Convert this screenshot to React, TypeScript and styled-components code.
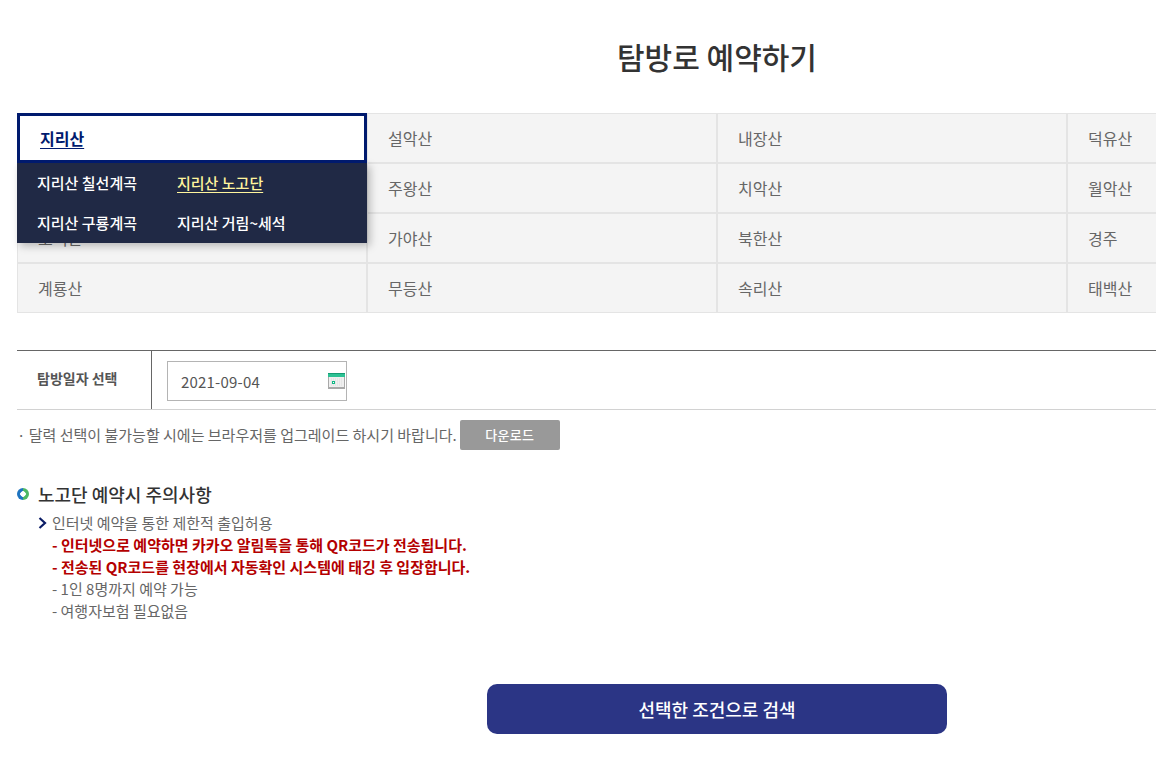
import * as React from 'react'
import styled, { createGlobalStyle } from 'styled-components'

const parks = [
  ['지리산', '설악산', '내장산', '덕유산'],
  ['오대산', '주왕산', '치악산', '월악산'],
  ['소백산', '가야산', '북한산', '경주'],
  ['계룡산', '무등산', '속리산', '태백산'],
]

const courses = [
  { name: '지리산 칠선계곡' },
  { name: '지리산 노고단', active: true },
  { name: '지리산 구룡계곡' },
  { name: '지리산 거림~세석' },
]

const notes = [
  { text: '- 인터넷으로 예약하면 카카오 알림톡을 통해 QR코드가 전송됩니다.', warn: true },
  { text: '- 전송된 QR코드를 현장에서 자동확인 시스템에 태깅 후 입장합니다.', warn: true },
  { text: '- 1인 8명까지 예약 가능' },
  { text: '- 여행자보험 필요없음' },
]

const CalendarIcon = () => (
  <svg width='17' height='16' viewBox='0 0 17 16'>
    <rect x='0' y='0' width='17' height='16' fill='#a9a9a9' />
    <rect x='1' y='4' width='15' height='10' fill='#efefef' />
    <rect x='0' y='0' width='17' height='4' fill='#2cc193' />
    <rect x='0' y='0' width='17' height='1' fill='#159a72' />
    <path d='M3 6h11M3 8h11M3 10h11M3 12h11' stroke='#dcdcdc' strokeWidth='1' strokeDasharray='1 1' fill='none' />
    <rect x='4' y='8' width='3' height='3' fill='#12b886' />
    <rect x='5' y='9' width='1' height='1' fill='#fff' />
  </svg>
)

const App: React.FC = () => (
  <>
    <GlobalStyle />
    <Page>
      <Title>탐방로 예약하기</Title>
      <ParkGrid>
        {parks.flat().map((name, i) => (
          <ParkCell key={name} $selected={i === 0}>{name}</ParkCell>
        ))}
        <CourseMenu>
          {courses.map((course) => (
            <CourseLink key={course.name} $active={course.active}>{course.name}</CourseLink>
          ))}
        </CourseMenu>
      </ParkGrid>
      <DateRow>
        <DateLabel>탐방일자 선택</DateLabel>
        <DateCell>
          <DateBox>
            2021-09-04
            <CalendarSlot><CalendarIcon /></CalendarSlot>
          </DateBox>
        </DateCell>
      </DateRow>
      <HelpRow>
        <HelpText>· 달력 선택이 불가능할 시에는 브라우저를 업그레이드 하시기 바랍니다.</HelpText>
        <DownloadButton>다운로드</DownloadButton>
      </HelpRow>
      <NoticeTitle>
        <Bullet />
        노고단 예약시 주의사항
      </NoticeTitle>
      <NoticeLead>
        <svg width='9' height='12' viewBox='0 0 9 12'>
          <path d='M1.5 1 L7 6 L1.5 11' fill='none' stroke='#0b1c66' strokeWidth='2.2' />
        </svg>
        인터넷 예약을 통한 제한적 출입허용
      </NoticeLead>
      {notes.map((note) => (
        <NoticeLine key={note.text} $warn={note.warn}>{note.text}</NoticeLine>
      ))}
      <SearchButton>선택한 조건으로 검색</SearchButton>
    </Page>
  </>
)

export default App

const GlobalStyle = createGlobalStyle`
  html, body {
    margin: 0;
    padding: 0;
    background: #fff;
    overflow: hidden;
    height: 772px;
  }
  body {
    font-family: "Noto Sans CJK KR", "Noto Sans", sans-serif;
    color: #555;
  }
`

const Page = styled.div`
  width: 1400px;
  margin-left: 17px;
`

const Title = styled.h1`
  margin: 0;
  height: 113px;
  padding-top: 34px;
  box-sizing: border-box;
  text-align: center;
  font-size: 30px;
  line-height: 45px;
  font-weight: 500;
  color: #333;
`

const ParkGrid = styled.div`
  position: relative;
  display: grid;
  grid-template-columns: repeat(4, 350px);
  grid-auto-rows: 50px;
`

const ParkCell = styled.div<{ $selected?: boolean }>`
  box-sizing: border-box;
  display: flex;
  align-items: center;
  padding: 0 0 1px 20px;
  font-size: 16px;
  color: ${(p) => (p.$selected ? '#001a6e' : '#666')};
  font-weight: ${(p) => (p.$selected ? 700 : 400)};
  text-decoration: ${(p) => (p.$selected ? 'underline' : 'none')};
  text-underline-offset: 3px;
  background: ${(p) => (p.$selected ? '#fff' : '#f4f4f4')};
  border-style: solid;
  border-color: ${(p) => (p.$selected ? '#001a6e' : '#e4e4e4')};
  border-width: ${(p) => (p.$selected ? '3px' : '1px 1px 1px 1px')};
  position: ${(p) => (p.$selected ? 'relative' : 'static')};
  z-index: ${(p) => (p.$selected ? 2 : 'auto')};
`

const CourseMenu = styled.div`
  position: absolute;
  top: 50px;
  left: 0;
  z-index: 1;
  width: 350px;
  height: 80px;
  box-sizing: border-box;
  padding-left: 20px;
  display: grid;
  grid-template-columns: 140px 1fr;
  grid-auto-rows: 40px;
  background: #202945;
  box-shadow: 3px 3px 8px rgba(0, 0, 0, 0.25);
`

const CourseLink = styled.a<{ $active?: boolean }>`
  align-self: center;
  justify-self: start;
  margin-top: -1px;
  font-size: 15px;
  font-weight: 500;
  color: ${(p) => (p.$active ? '#fff59d' : '#fff')};
  text-decoration: ${(p) => (p.$active ? 'underline' : 'none')};
  text-underline-offset: 3px;
`

const DateRow = styled.div`
  margin-top: 37px;
  display: flex;
  height: 60px;
  box-sizing: border-box;
  border-top: 1px solid #666;
  border-bottom: 1px solid #d2d2d2;
`

const DateLabel = styled.div`
  box-sizing: border-box;
  width: 135px;
  padding: 0 0 5px 20px;
  display: flex;
  align-items: center;
  font-size: 14px;
  font-weight: 700;
  color: #555;
  border-right: 1px solid #666;
`

const DateCell = styled.div`
  padding: 10px 0 0 15px;
`

const DateBox = styled.div`
  position: relative;
  box-sizing: border-box;
  width: 180px;
  height: 40px;
  padding-left: 13px;
  display: flex;
  align-items: center;
  border: 1px solid #b4b4b4;
  font-size: 15px;
  letter-spacing: 0.2px;
  color: #555;
`

const CalendarSlot = styled.span`
  position: absolute;
  top: 11px;
  right: 1px;
  line-height: 0;
`

const HelpRow = styled.div`
  margin-top: 10px;
  display: flex;
  align-items: center;
  gap: 3px;
  height: 30px;
  font-size: 15px;
  color: #666;
`

const HelpText = styled.span`
  margin-top: -2px;
`

const DownloadButton = styled.span`
  width: 100px;
  height: 30px;
  padding-bottom: 1px;
  box-sizing: border-box;
  display: flex;
  align-items: center;
  justify-content: center;
  border-radius: 2px;
  background: #999;
  color: #fff;
  font-size: 13px;
  letter-spacing: 0.3px;
  font-weight: 500;
`

const NoticeTitle = styled.h2`
  margin: 32px 0 0;
  display: flex;
  align-items: center;
  gap: 9px;
  height: 24px;
  font-size: 18px;
  font-weight: 500;
  color: #333;
`

const Bullet = styled.i`
  width: 12px;
  height: 12px;
  border-radius: 50%;
  background:
    radial-gradient(circle, #fff 0 2.5px, transparent 3px),
    linear-gradient(90deg, #1f74c0 0 50%, #4db865 50% 100%);
`

const NoticeLead = styled.div`
  margin-top: 5px;
  margin-left: 21px;
  display: flex;
  align-items: center;
  gap: 5px;
  height: 23px;
  font-size: 15px;
  color: #666;
`

const NoticeLine = styled.div<{ $warn?: boolean }>`
  margin-left: 35px;
  height: 22px;
  line-height: 22px;
  font-size: 15px;
  font-weight: ${(p) => (p.$warn ? 700 : 400)};
  color: ${(p) => (p.$warn ? '#b40000' : '#666')};
`

const SearchButton = styled.button`
  display: block;
  margin: 62px auto 0;
  width: 460px;
  height: 50px;
  border: 0;
  border-radius: 10px;
  background: #2b3585;
  color: #fff;
  font-family: inherit;
  font-size: 18px;
  font-weight: 500;
`
